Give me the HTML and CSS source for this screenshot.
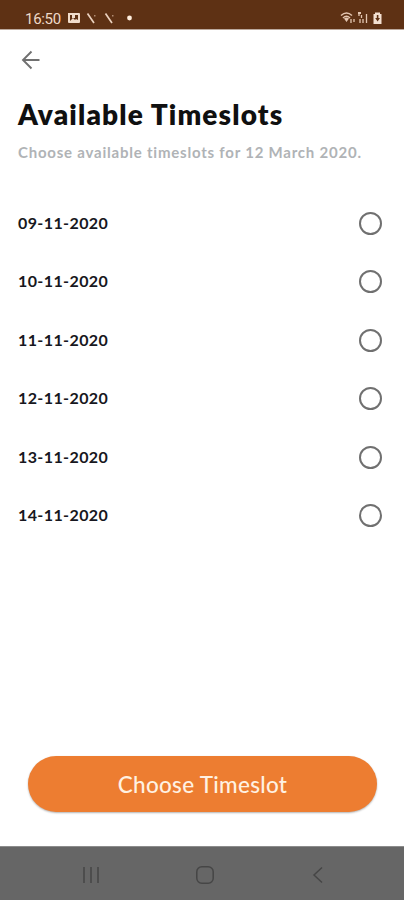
FILE: index.html
```html
<!DOCTYPE html>
<html lang="en">
<head>
<meta charset="utf-8">
<title>Available Timeslots</title>
<link rel="stylesheet" href="styles.css">
</head>
<body>
<div class="screen">
  <header class="status">
    <span class="clock">16:50</span>
    <svg class="notices" width="70" height="16" viewBox="0 0 70 16">
      <path fill="#f1dccb" fill-rule="evenodd" d="M1 3h11q1 0 1 1v8q0 1-1 1H2q-1 0-1-1zM3 5v6l3-3 2 2 1-1 2 1V5z"/>
      <path fill="#f1dccb" d="M5 5h3v3H5z"/>
      <path fill="none" stroke="#ead0bd" stroke-width="1.700" d="M20.500 3.500 27 13M38.500 3.500 45 13"/>
      <path fill="#b08b72" d="M27 5h1.500v1.500H27zM45 5h1.500v1.500H45z"/>
      <circle cx="62.500" cy="8" r="2.400" fill="#ffeede"/>
    </svg>
    <svg class="signals" width="44" height="14" viewBox="0 0 44 14">
      <g fill="none" stroke="#e3c5b0" stroke-width="1.500">
        <path d="M1 4.500Q6.500-.5 12 4.500M3 7Q6.500 3.500 10 7"/>
        <path stroke-width="1.300" d="M11 8v4M14 8v3M19 2v3M21.500 4v3M20 8v4M23 8v4M26.500 3v9" />
      </g>
      <path fill="#e3c5b0" d="M4 7.500Q6.500 5.500 9 7.500L6.500 11zM18 1h3v2h-3z"/>
      <path fill="#f3e0d1" d="M33.500 3H35V1.500h5V3h1.500v10h-8z"/>
      <path fill="#5e3114" d="M36.800 4h1.600v3H40l-2.400 3.500L35.200 7h1.600z"/>
    </svg>
  </header>
  <main class="content">
    <svg class="back" width="20" height="20" viewBox="0 0 20 20">
      <path fill="none" stroke="#707070" stroke-width="1.900" d="M18.500 10H2.500M10.500 1.500 2 10l8.500 8.500"/>
    </svg>
    <h1 class="title">Available Timeslots</h1>
    <p class="subtitle">Choose available timeslots for 12 March 2020.</p>
    <ul class="slots">
      <li class="slot"><span class="date">09-11-2020</span><i class="radio"></i></li>
      <li class="slot"><span class="date">10-11-2020</span><i class="radio"></i></li>
      <li class="slot"><span class="date">11-11-2020</span><i class="radio"></i></li>
      <li class="slot"><span class="date">12-11-2020</span><i class="radio"></i></li>
      <li class="slot"><span class="date">13-11-2020</span><i class="radio"></i></li>
      <li class="slot"><span class="date">14-11-2020</span><i class="radio"></i></li>
    </ul>
    <button class="choose">Choose Timeslot</button>
  </main>
  <nav class="navbar">
    <svg width="20" height="20" viewBox="0 0 20 20"><path stroke="#464646" stroke-width="1.500" d="M3 2v16M10 2v16M17 2v16"/></svg>
    <svg width="20" height="20" viewBox="0 0 20 20"><rect x="1.800" y="1.800" width="16.400" height="16.400" rx="5" fill="none" stroke="#464646" stroke-width="1.500"/></svg>
    <svg width="20" height="20" viewBox="0 0 20 20"><path fill="none" stroke="#464646" stroke-width="1.500" d="M14 2.500 6 10l8 7.500"/></svg>
  </nav>
</div>
</body>
</html>
```
FILE: styles.css
```css
* { box-sizing: border-box; }
body { margin: 0; background: #fff; font-family: Lato, "Liberation Sans", sans-serif; }
.screen { width: 404px; height: 900px; display: flex; flex-direction: column; }
.status {
  height: 30px; flex: none; display: flex; align-items: flex-start;
  padding: 10px 20px 0 25px; background: #5e3114; border-bottom: 1px solid #bca99d; color: #efd9c8;
}
.clock { width: 42px; font: 400 15px/18px Roboto, sans-serif; letter-spacing: -0.3px; }
.notices { display: block; }
.signals { display: block; margin: 1px 0 0 auto; }
.content { flex: 1; display: flex; flex-direction: column; padding: 20px 22px 34px 18px; }
.back { display: block; flex: none; margin-left: 3px; }
.title { margin: 26px 0 0; font-size: 28px; line-height: 36px; font-weight: 800; letter-spacing: 1.15px; color: #101010; white-space: nowrap; }
.subtitle { margin: 10px 0 0; font-size: 15px; line-height: 20px; font-weight: 700; letter-spacing: 0.78px; color: #b0b3b6; white-space: nowrap; }
.slots { list-style: none; margin: 32px 0 0; padding: 0; }
.slot { height: 58.500px; display: flex; align-items: center; justify-content: space-between; font-size: 16px; font-weight: 700; letter-spacing: 0.4px; color: #171720; }
.date { padding-bottom: 2px; }
.radio { width: 23px; height: 23px; border: 2px solid #707070; border-radius: 50%; }
.choose {
  margin: auto 5px 0 10px; height: 56px; flex: none; border: 0; border-radius: 28px; padding: 1px 0 0;
  background: #ed7d31; color: #fff1e2; font: 500 22.500px/55px Lato, sans-serif; letter-spacing: 0.3px;
  box-shadow: 0 1px 2px rgba(0, 0, 0, 0.3);
}
.navbar { height: 54px; flex: none; display: flex; justify-content: space-between; align-items: center; padding: 2px 76px 0 81px; background: #666; border-top: 1px solid #8c8c8c; }
```
